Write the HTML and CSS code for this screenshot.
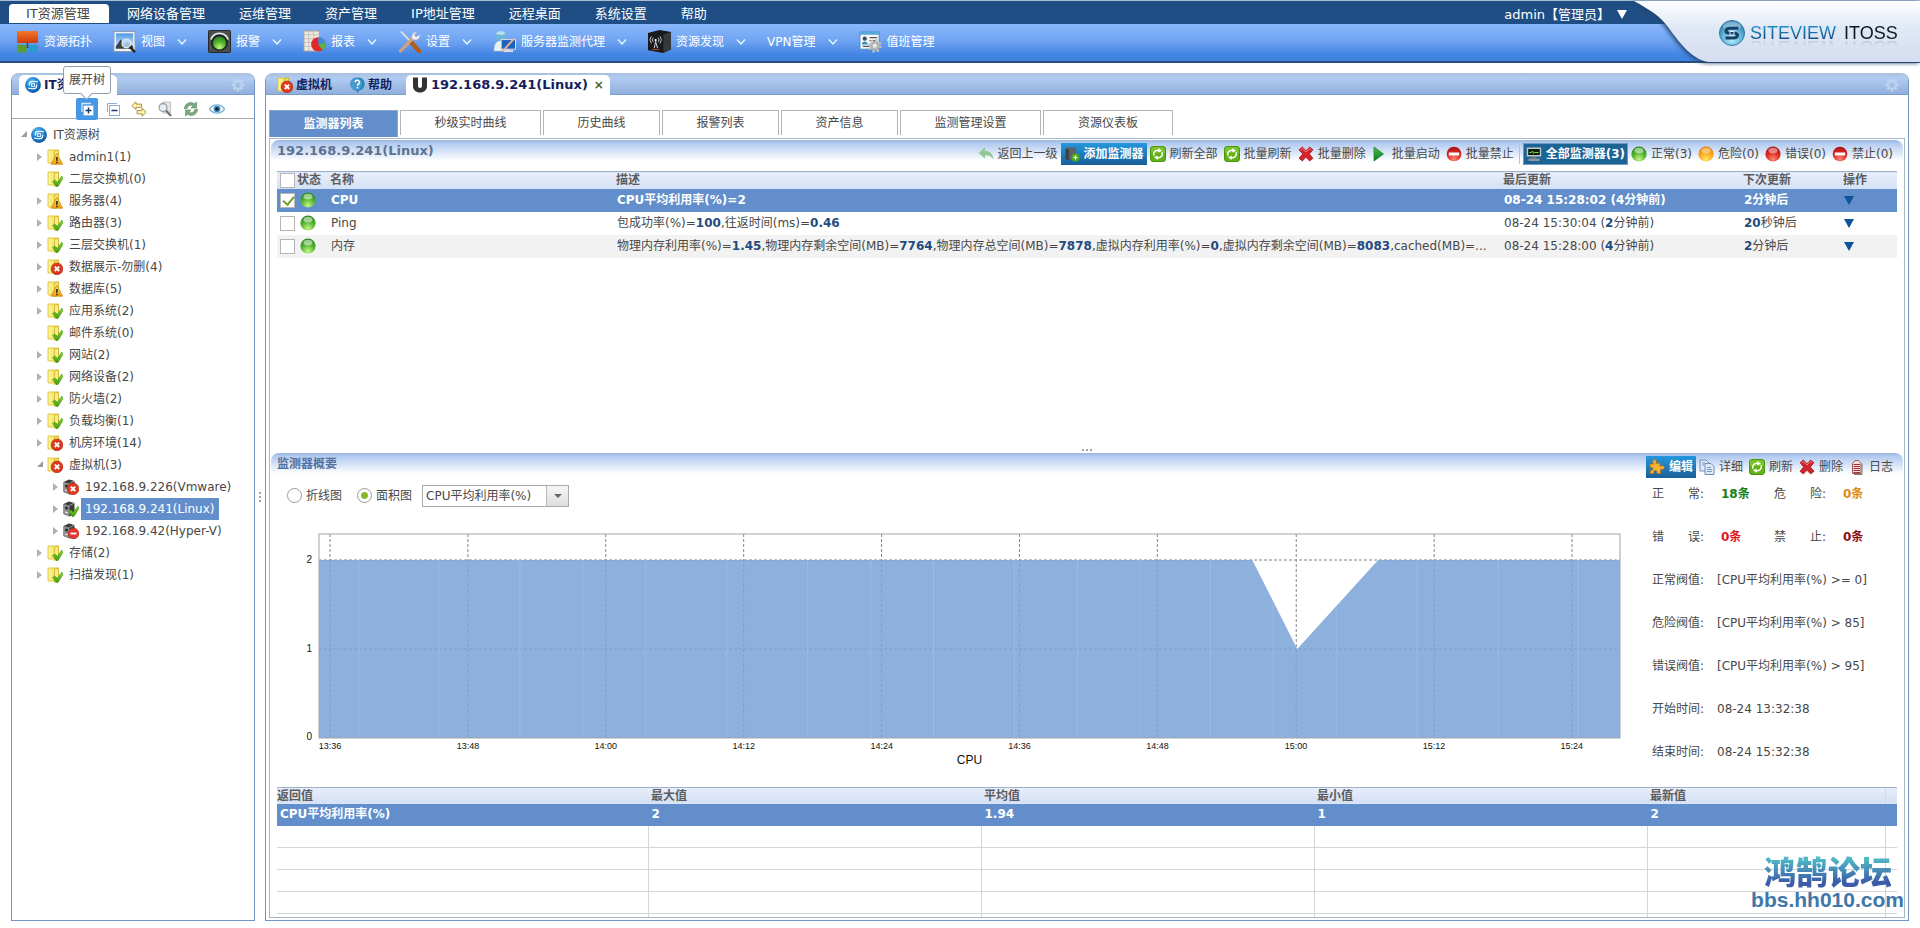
FILE: index.html
```html
<!DOCTYPE html>
<html lang="zh-CN">
<head>
<meta charset="utf-8">
<title>SiteView ITOSS</title>
<link rel="stylesheet" href="styles.css">
</head>
<body>
<svg class="sprite" aria-hidden="true">
  <defs>
    <radialGradient id="gBlue" cx=".4" cy=".3" r=".8"><stop offset="0" stop-color="#5fbcf0"/><stop offset=".5" stop-color="#1f80d0"/><stop offset="1" stop-color="#0a4a9a"/></radialGradient>
    <radialGradient id="gGlass" cx=".5" cy=".75" r=".8"><stop offset="0" stop-color="#b9ecfb"/><stop offset=".5" stop-color="#5fb2d8"/><stop offset="1" stop-color="#1c6aa0"/></radialGradient>
    <radialGradient id="gGreen" cx=".5" cy=".85" r=".9"><stop offset="0" stop-color="#c8f58a"/><stop offset=".5" stop-color="#52b52c"/><stop offset="1" stop-color="#1f7a1c"/></radialGradient>
    <radialGradient id="gOrange" cx=".5" cy=".85" r=".9"><stop offset="0" stop-color="#ffe76a"/><stop offset=".5" stop-color="#fba81c"/><stop offset="1" stop-color="#e07a00"/></radialGradient>
    <radialGradient id="gRed" cx=".5" cy=".85" r=".9"><stop offset="0" stop-color="#ff8a70"/><stop offset=".5" stop-color="#dd2a22"/><stop offset="1" stop-color="#a30c10"/></radialGradient>
    <linearGradient id="gFolder" x1="0" x2="1"><stop offset="0" stop-color="#fdf7a0"/><stop offset="1" stop-color="#eed63c"/></linearGradient>
    <linearGradient id="gWarn" x2="0" y2="1"><stop offset="0" stop-color="#ffe25a"/><stop offset="1" stop-color="#f39a12"/></linearGradient>
    <linearGradient id="gLeaf" x2="0" y2="1"><stop offset="0" stop-color="#8fd62e"/><stop offset="1" stop-color="#3f9a10"/></linearGradient>
    <linearGradient id="gPlay" x2="0" y2="1"><stop offset="0" stop-color="#4cc04c"/><stop offset="1" stop-color="#0c7a22"/></linearGradient>
    <linearGradient id="gBrand" x2="0" y2="1"><stop offset="0" stop-color="#ffffff"/><stop offset=".45" stop-color="#dfe8f5"/><stop offset="1" stop-color="#d5ddf0"/></linearGradient>
    <linearGradient id="gTopo" x2="0" y2="1"><stop offset="0" stop-color="#f4762c"/><stop offset="1" stop-color="#d13c08"/></linearGradient>
    <linearGradient id="gSky" x2="0" y2="1"><stop offset="0" stop-color="#4f9be6"/><stop offset="1" stop-color="#dcefff"/></linearGradient>
  </defs>
  <symbol id="ball" viewBox="0 0 16 16"><circle cx="8" cy="8" r="7.900" fill="url(#gBlue)"/><path d="M13 5C10.500 4 6.500 4 5.200 5 4 6.200 4.300 7 4.300 8.500M3 11C5.500 12 9.500 12 10.800 11 12 9.800 11.700 9 11.700 7.500" fill="none" stroke="#fff" stroke-width="1.200"/><rect x="6.600" y="6.600" width="2.900" height="2.900" fill="none" stroke="#e6f6ff" stroke-width=".9"/></symbol>
  <symbol id="logo" viewBox="0 0 26 26"><circle cx="13" cy="13" r="12.500" fill="url(#gGlass)" stroke="#2f78a8"/><ellipse cx="13" cy="6.500" rx="9" ry="5" fill="#fff" opacity=".35"/><path d="M19.500 8.200H11.500C8 8.200 7 9.500 7 11s1 2.300 3.500 2.300H15c2.500 0 3.500.8 3.500 2s-1 2.700-4.500 2.700H6.500" fill="none" stroke="#173f66" stroke-width="3"/><path d="M11 11.500h4v3.500h-4z" fill="none" stroke="#e6f7ff" stroke-width=".9"/></symbol>
  <symbol id="folder" viewBox="0 0 16 16"><path d="M1 1h10.500v13H1z" fill="url(#gFolder)" stroke="#d8bd2a" stroke-width=".8"/><path d="M7.500 2.500 11.500 1v13l-4 1.500z" fill="#f7ee86" stroke="#c7a921" stroke-width=".7"/></symbol>
  <symbol id="b-ok" viewBox="0 0 16 16"><path d="M5.500 10.500 8 9l2.300 2.300L14.800 5 16 7.500 11 15.500 9.600 15.900z" fill="url(#gLeaf)" stroke="#3c9413" stroke-width=".5"/></symbol>
  <symbol id="b-warn" viewBox="0 0 16 16"><path d="M9.800 4.200 15.700 15.200H4z" fill="url(#gWarn)" stroke="#c9860c" stroke-width=".7"/><path d="M9.900 8v3.800M9.900 12.800v1.500" stroke="#222" stroke-width="1.500"/></symbol>
  <symbol id="b-err" viewBox="0 0 16 16"><circle cx="10" cy="9.800" r="5.900" fill="#dd3a1f" stroke="#a8200c" stroke-width=".6"/><path d="M7.800 7.600l4.400 4.400M12.200 7.600 7.800 12" stroke="#fff" stroke-width="2"/></symbol>
  <symbol id="b-stop" viewBox="0 0 16 16"><circle cx="10.500" cy="10.500" r="5.400" fill="#e4392e" stroke="#ad1d15" stroke-width=".6"/><path d="M7.500 10.500h6" stroke="#fff" stroke-width="1.800"/></symbol>
  <symbol id="server" viewBox="0 0 16 16"><path d="M.5 3 6 .6l5.500 1.500V13L6.500 15.500.5 13z" fill="#3a3a3a"/><path d="M.5 3l6 1.600v10.900L.5 13z" fill="#8f8f8f"/><path d="M6.500 4.600 11.500 2" stroke="#bbb" stroke-width=".8"/><circle cx="3.500" cy="7" r="1.600" fill="#333"/><path d="M2 11l3 .8" stroke="#eee"/></symbol>
  <symbol id="gear" viewBox="0 0 16 16"><circle cx="8" cy="8" r="3.900" fill="none" stroke="currentColor" stroke-width="2.200"/><path d="M8 1.500v2M8 12.500v2M1.500 8h2M12.500 8h2M3.400 3.400l1.500 1.500M11.100 11.100l1.500 1.500M12.600 3.400l-1.500 1.500M4.900 11.100l-1.500 1.500" stroke="currentColor" stroke-width="2.400"/></symbol>
  <symbol id="chev" viewBox="0 0 10 8"><path d="M1 1.500 5 6l4-4.500" fill="none" stroke="#e4fbff" stroke-width="1.400"/></symbol>
  <symbol id="topo" viewBox="0 0 24 24"><path d="M12 13v5M8 18h8" stroke="#3a4a60" stroke-width="1.600"/><rect x="1" y="1" width="22" height="12.500" rx="1.500" fill="url(#gTopo)"/><rect x="1" y="15.500" width="10" height="8" rx="1.500" fill="#5b9c33"/><rect x="13" y="15.500" width="10" height="8" rx="1.500" fill="#2d9bd0"/></symbol>
  <symbol id="view" viewBox="0 0 24 24"><rect x="1" y="1.500" width="22" height="21" fill="#eef1f4" stroke="#8d98a6"/><rect x="3" y="3.500" width="18" height="16" fill="url(#gSky)"/><path d="M3 17l5-7 4 5 3-3 6 5v2.500H3z" fill="#38424a"/><circle cx="14" cy="14" r="4.500" fill="#bfe0f6" fill-opacity=".8" stroke="#dfe6ec" stroke-width="1.500"/><path d="M17.500 17.500 23 23" stroke="#222" stroke-width="2.600"/></symbol>
  <symbol id="alarm" viewBox="0 0 24 24"><rect x=".5" y=".5" width="23" height="23" rx="1" fill="#4a504d" stroke="#222"/><circle cx="12" cy="13" r="9" fill="#232826"/><path d="M3 10a9.500 9.500 0 0 1 18 0" fill="none" stroke="#e7eeea" stroke-width="1.800"/><circle cx="12" cy="13.500" r="6.800" fill="url(#gGreen)"/></symbol>
  <symbol id="report" viewBox="0 0 24 24"><rect x="1" y="1" width="16" height="21" fill="#eee9e2" stroke="#a59e96"/><path d="M1 5h16M1 9h16M1 13h16M1 17h16M6 1v21M11 1v21" stroke="#bdb6ae" stroke-width=".8"/><circle cx="16" cy="15" r="7.500" fill="#e0282e"/><path d="M16 15V7.500A7.500 7.500 0 0 1 23.300 13z" fill="#3b8fe0"/><path d="M16 15l7.300-2a7.500 7.500 0 0 1-3 8z" fill="#59b34a"/></symbol>
  <symbol id="tools" viewBox="0 0 24 24"><path d="M3 1.500 14 13" stroke="#d9dde0" stroke-width="2"/><path d="M13.500 12.500 22 22" stroke="#b65a18" stroke-width="4.500" stroke-linecap="round"/><path d="M2.500 22 16 8" stroke="#d1a37c" stroke-width="3.400" stroke-linecap="round"/><path d="M15 9.500c-2-4 1-8 5-7.500l-3 3 1.800 2.300 4-2.500c.8 4-3.800 7.200-7.800 4.700z" fill="#f0f2f3" stroke="#a8adb1" stroke-width=".6"/></symbol>
  <symbol id="agent" viewBox="0 0 24 24"><path d="M1 22c0-8 3-11 8-11s8 3 8 11z" fill="#e9f0f6" stroke="#a9bccb" stroke-width=".6"/><circle cx="8" cy="6" r="5.500" fill="#6bb7d6"/><path d="M3 4c2-4 8-4 10 0-3 2-7 1-10 0z" fill="#b9dfef"/><rect x="8.500" y="10" width="15" height="10" fill="#1c62c0" stroke="#e1e1e1"/><path d="M11 21h10v2H11z" fill="#ddd"/><path d="M22 9 13 19l-3 3" fill="none" stroke="#efb08a" stroke-width="2"/></symbol>
  <symbol id="discover" viewBox="0 0 24 24"><path d="M0 3 12 0l12 2v18l-8 4L0 21z" fill="#17191b"/><path d="M16 5 24 2v18l-8 4z" fill="#35393c"/><path d="M8 12 6.500 19M8 12l2 7" stroke="#ddd"/><circle cx="8" cy="10.500" r="1.200" fill="#fff"/><path d="M5.500 12.500a3.200 3.200 0 0 1 0-4.500M10.500 12.500a3.200 3.200 0 0 0 0-4.500M3.500 14a6 6 0 0 1 0-7.500M12.500 14a6 6 0 0 0 0-7.500" fill="none" stroke="#ddd" stroke-width=".9"/><path d="M4 20.500h8" stroke="#c04030"/></symbol>
  <symbol id="duty" viewBox="0 0 24 24"><rect x="1" y="2" width="20" height="18" fill="#f5f7f8" stroke="#4f8fc0"/><path d="M1 2h20v3H1z" fill="#5aa7da"/><circle cx="6" cy="9" r="2.200" fill="#3c4f5c"/><path d="M3 15c0-4 6-4 6 0z" fill="#3c8fc0"/><path d="M11 8h8M11 11h6M4 17h7" stroke="#555" stroke-width="1.300"/><g transform="translate(9.500 9.500)"><circle cx="7" cy="7" r="6" fill="none" stroke="#c4c4c4" stroke-width="2.200" stroke-dasharray="2.400 2.300"/><circle cx="7" cy="7" r="3.600" fill="#eee" stroke="#b4b4b4" stroke-width="3"/></g></symbol>
  <symbol id="expand" viewBox="0 0 16 16"><path d="M3 11V2.500H12" fill="none" stroke="#cfe6fb" stroke-width="1.300"/><rect x="4.500" y="4.500" width="10" height="10" fill="#fff" stroke="#8fb6dd"/><path d="M9.500 6.500v6M6.500 9.500h6" stroke="#1a3c6c" stroke-width="1.500"/></symbol>
  <symbol id="collapse" viewBox="0 0 16 16"><path d="M2.500 11V2.500H12" fill="none" stroke="#8fb0cf"/><rect x="4.500" y="4.500" width="10" height="10" fill="#fff" stroke="#8fb0cf"/><path d="M6.500 9.500h6" stroke="#1a3c6c" stroke-width="1.500"/></symbol>
  <symbol id="swap" viewBox="0 0 16 16"><path d="M.8 4.700 5 .8v2.300h5.500v3.200H5v2.300z" fill="#fff4b8" stroke="#a5862a" stroke-width=".9"/><path d="M15.200 11.200 11 7.200v2.400H6v3.200h5v2.400z" fill="#fff4b8" stroke="#a5862a" stroke-width=".9"/></symbol>
  <symbol id="find" viewBox="0 0 16 16"><path d="M6 1h7.500v11H6z" fill="#e6e6e6" stroke="#b5b5b5" stroke-width=".8"/><circle cx="6" cy="6.500" r="4" fill="#e9eef2" stroke="#9da2a5" stroke-width="1.300"/><path d="M9 9.500 14 15" stroke="#777" stroke-width="2.400"/></symbol>
  <symbol id="reload" viewBox="0 0 16 16"><path d="M1.500 8C1 3 7-.5 11.500 2.800L13.500.8V7H8l2-2.200C7.500 3.400 4.500 5 4.300 7.500z" fill="#7ca97c" stroke="#557e59" stroke-width=".5"/><path d="M14.500 8c.5 5-5.500 8.500-10 5.200L2.500 15.200V9H8l-2 2.200c2.500 1.400 5.500-.2 5.700-2.700z" fill="#7ca97c" stroke="#557e59" stroke-width=".5"/></symbol>
  <symbol id="eye" viewBox="0 0 16 16"><path d="M.5 8C4 2.500 12 2.500 15.500 8 12 13.500 4 13.500.5 8z" fill="#eef7fc" stroke="#76b0d2" stroke-width="1.300"/><circle cx="8" cy="8" r="3.300" fill="#3a86b8"/><circle cx="8" cy="8" r="1.800" fill="#12222e"/></symbol>
  <symbol id="helpi" viewBox="0 0 16 16"><path d="M8.500.5a6.500 6.500 0 0 1 1.500 13L9 16l-2-2.500A6.500 6.500 0 0 1 8.500.5z" fill="#2b86bd"/><circle cx="7" cy="7" r="6" fill="#58a9d6" opacity=".6"/><path d="M6.200 5.200c.2-2.700 4.600-2.300 4.300.2-.2 1.400-2 1.700-2 3.300M8.500 10v1.600" fill="none" stroke="#fff" stroke-width="1.500"/></symbol>
  <symbol id="umark" viewBox="0 0 16 16"><path d="M1 .5h5V9c0 2.500 4 2.500 4 0V.5h5V9c0 4-3 6.500-7 6.500S1 13 1 9z" fill="#333"/></symbol>
  <symbol id="back" viewBox="0 0 16 16"><path d="M7 1.500v3.300c5 .2 8 3 8.500 8.700-2-3.300-4.500-4.300-8.500-4.200v3.200L.5 7z" fill="#93c795"/></symbol>
  <symbol id="addmon" viewBox="0 0 16 16"><path d="M1.500 2.500 7 1l5 1v10l-5 2-5.500-1z" fill="#5c6266"/><path d="M1.500 2.500 5 3.500V14l-3.500-1z" fill="#3d4245"/><circle cx="11.500" cy="11.500" r="4" fill="#4fa81c"/><path d="M9.500 11.500h4M11.500 9.500v4" stroke="#fff" stroke-width="1.200"/></symbol>
  <symbol id="refresh" viewBox="0 0 16 16"><rect x=".5" y=".5" width="15" height="15" rx="2.500" fill="#62b117" stroke="#4c970c"/><path d="M1 4a3 3 0 0 1 3-3h8a3 3 0 0 1 3 3v3H1z" fill="#8bcf3c" opacity=".6"/><path d="M3.900 9.800C2.800 6.500 5.500 3.700 9 4.300M12.100 6.200c1.100 3.300-1.600 6.100-5.100 5.500" fill="none" stroke="#fff" stroke-width="1.500"/><path d="M8.500 2l3.700 3-4.200 1.300zM7.500 14l-3.700-3L8 9.700z" fill="#fff"/></symbol>
  <symbol id="del" viewBox="0 0 16 16"><path d="M1 3.800 4.300 1 8 4.700 11.700 1 15 3.800 11.300 8 15 12.200 11.700 15 8 11.300 4.300 15 1 12.200 4.700 8z" fill="#d3222a" stroke="#9c1018" stroke-width=".7"/><path d="M2.500 4 4.300 2.500 8 6l3.700-3.500L13.500 4" fill="none" stroke="#f28a86" stroke-width=".9"/></symbol>
  <symbol id="play" viewBox="0 0 16 16"><path d="M2 1l9.500 7L2 15z" fill="url(#gPlay)" stroke="#18892a" stroke-width=".8"/></symbol>
  <symbol id="stop" viewBox="0 0 16 16"><circle cx="8" cy="8" r="7.300" fill="url(#gRed)"/><rect x="2.800" y="6.500" width="10.400" height="3" fill="#fff"/></symbol>
  <symbol id="mon" viewBox="0 0 16 16"><rect x=".8" y="1.500" width="14.400" height="9" fill="#c3c8ca"/><rect x="2.200" y="3" width="11.600" height="6" fill="#0c1f0c"/><path d="M3.500 6.500h2l1-1.500 1 2.500 1-1h4" fill="none" stroke="#7cdf3a"/><path d="M6 10.500h4v2H6z" fill="#777"/><rect x="2.500" y="12.500" width="11" height="2.500" fill="#8d979c"/></symbol>
  <symbol id="green" viewBox="0 0 16 16"><circle cx="8" cy="8" r="7.600" fill="url(#gGreen)"/><ellipse cx="8" cy="4.600" rx="4.500" ry="2.900" fill="#fff" opacity=".5"/></symbol>
  <symbol id="orange" viewBox="0 0 16 16"><circle cx="8" cy="8" r="7.600" fill="url(#gOrange)"/><ellipse cx="8" cy="4.600" rx="4.500" ry="2.900" fill="#fff" opacity=".4"/></symbol>
  <symbol id="red" viewBox="0 0 16 16"><circle cx="8" cy="8" r="7.600" fill="url(#gRed)"/><ellipse cx="8" cy="4.600" rx="4.500" ry="2.900" fill="#fff" opacity=".45"/></symbol>
  <symbol id="puzzle" viewBox="0 0 16 16"><path d="M1 5h3.500C3 2 4 .8 5.500.8S8 2 7 4.500l4-.5v3.500c3-1.500 4.200-.5 4.200 1S14 11 11.500 10v4.500H7.800c.8-2-.2-3-1.500-3s-2 1.200-1.300 3H1.200L1.500 11c1.800.8 2.500-.2 2.500-1.300S3.200 8 1.300 8.700z" fill="#f8b133" stroke="#b97415" stroke-width=".7"/></symbol>
  <symbol id="copy" viewBox="0 0 16 16"><path d="M1 1h6l3 3v8H1z" fill="#dfe8f6" stroke="#7390bd"/><path d="M6 4.500h6l3 3v8H6z" fill="#dfe8f6" stroke="#7390bd"/><path d="M8 8.500h4M8 10.500h5M8 12.500h5M3 4h3M3 6h2" stroke="#7a98c8"/></symbol>
  <symbol id="log" viewBox="0 0 16 16"><path d="M3.500 4.500 6 1.500h3.500L12 4.500v10H3.500z" fill="#f3dedd" stroke="#8c3a3a" stroke-width=".8"/><path d="M4.500 5.500h6.500M4.500 7.500h6.500M4.500 9.500h6.500M4.500 11.500h6.500M4.500 13.500h6.500" stroke="#a12e2e"/><path d="M13 4.500v11H5" fill="none" stroke="#777"/></symbol>
</svg>

<header class="top">
  <div class="menus">
    <nav class="nav">
      <a class="nav-item on" href="#">IT资源管理</a><a class="nav-item" href="#">网络设备管理</a><a class="nav-item" href="#">运维管理</a><a class="nav-item" href="#">资产管理</a><a class="nav-item" href="#">IP地址管理</a><a class="nav-item" href="#">远程桌面</a><a class="nav-item" href="#">系统设置</a><a class="nav-item" href="#">帮助</a>
      <button class="user" type="button">admin【管理员】<span class="user-arrow"></span></button>
    </nav>
    <div class="bar">
      <button type="button"><svg class="i24"><use href="#topo"/></svg>资源拓扑</button>
      <button type="button"><svg class="i24"><use href="#view"/></svg>视图<svg class="chev"><use href="#chev"/></svg></button>
      <button type="button"><svg class="i24"><use href="#alarm"/></svg>报警<svg class="chev"><use href="#chev"/></svg></button>
      <button type="button"><svg class="i24"><use href="#report"/></svg>报表<svg class="chev"><use href="#chev"/></svg></button>
      <button type="button"><svg class="i24"><use href="#tools"/></svg>设置<svg class="chev"><use href="#chev"/></svg></button>
      <button type="button"><svg class="i24"><use href="#agent"/></svg>服务器监测代理<svg class="chev"><use href="#chev"/></svg></button>
      <button type="button"><svg class="i24"><use href="#discover"/></svg>资源发现<svg class="chev"><use href="#chev"/></svg></button>
      <button type="button">VPN管理<svg class="chev"><use href="#chev"/></svg></button>
      <button type="button"><svg class="i24"><use href="#duty"/></svg>值班管理</button>
    </div>
  </div>
  <div class="brand">
    <svg class="brand-bg" viewBox="0 0 286 61" aria-hidden="true"><path d="M0 0C18 10 27 16 34 26 47 44 60 60 76 61H286V0Z" fill="url(#gBrand)"/></svg>
    <svg class="brand-ball"><use href="#logo"/></svg>
    <span class="brand-a">SITEVIEW</span><span class="brand-b">ITOSS</span>
  </div>
</header>

<div class="work">
  <aside class="panel side">
    <div class="tabs">
      <button class="tab on side-tab" type="button"><svg class="i16"><use href="#ball"/></svg>IT资源树</button>
      <button class="cog" type="button" aria-label="设置"><svg class="i16"><use href="#gear"/></svg></button>
    </div>
    <div class="tree-tools">
      <button class="on" type="button" aria-label="展开树"><svg class="i16"><use href="#expand"/></svg><span class="tip">展开树</span></button>
      <button type="button" aria-label="收起树"><svg class="i16"><use href="#collapse"/></svg></button>
      <button type="button" aria-label="切换"><svg class="i16"><use href="#swap"/></svg></button>
      <button type="button" aria-label="查找"><svg class="i16"><use href="#find"/></svg></button>
      <button type="button" aria-label="刷新"><svg class="i16"><use href="#reload"/></svg></button>
      <button type="button" aria-label="查看"><svg class="i16"><use href="#eye"/></svg></button>
    </div>
    <ul class="tree">
      <li class="l0"><i class="open"></i><svg class="i16"><use href="#ball"/></svg><span>IT资源树</span></li>
      <li><i class="shut"></i><svg class="i16"><use href="#folder"/><use href="#b-warn"/></svg><span>admin1(1)</span></li>
      <li><i></i><svg class="i16"><use href="#folder"/><use href="#b-ok"/></svg><span>二层交换机(0)</span></li>
      <li><i class="shut"></i><svg class="i16"><use href="#folder"/><use href="#b-warn"/></svg><span>服务器(4)</span></li>
      <li><i class="shut"></i><svg class="i16"><use href="#folder"/><use href="#b-ok"/></svg><span>路由器(3)</span></li>
      <li><i class="shut"></i><svg class="i16"><use href="#folder"/><use href="#b-ok"/></svg><span>三层交换机(1)</span></li>
      <li><i class="shut"></i><svg class="i16"><use href="#folder"/><use href="#b-err"/></svg><span>数据展示-勿删(4)</span></li>
      <li><i class="shut"></i><svg class="i16"><use href="#folder"/><use href="#b-warn"/></svg><span>数据库(5)</span></li>
      <li><i class="shut"></i><svg class="i16"><use href="#folder"/><use href="#b-ok"/></svg><span>应用系统(2)</span></li>
      <li><i></i><svg class="i16"><use href="#folder"/><use href="#b-ok"/></svg><span>邮件系统(0)</span></li>
      <li><i class="shut"></i><svg class="i16"><use href="#folder"/><use href="#b-ok"/></svg><span>网站(2)</span></li>
      <li><i class="shut"></i><svg class="i16"><use href="#folder"/><use href="#b-ok"/></svg><span>网络设备(2)</span></li>
      <li><i class="shut"></i><svg class="i16"><use href="#folder"/><use href="#b-ok"/></svg><span>防火墙(2)</span></li>
      <li><i class="shut"></i><svg class="i16"><use href="#folder"/><use href="#b-ok"/></svg><span>负载均衡(1)</span></li>
      <li><i class="shut"></i><svg class="i16"><use href="#folder"/><use href="#b-err"/></svg><span>机房环境(14)</span></li>
      <li><i class="open"></i><svg class="i16"><use href="#folder"/><use href="#b-err"/></svg><span>虚拟机(3)</span></li>
      <li class="l2"><i class="shut"></i><svg class="i16"><use href="#server"/><use href="#b-err"/></svg><span>192.168.9.226(Vmware)</span></li>
      <li class="l2 sel"><i class="shut"></i><svg class="i16"><use href="#server"/><use href="#b-ok"/></svg><span>192.168.9.241(Linux)</span></li>
      <li class="l2"><i class="shut"></i><svg class="i16"><use href="#server"/><use href="#b-stop"/></svg><span>192.168.9.42(Hyper-V)</span></li>
      <li><i class="shut"></i><svg class="i16"><use href="#folder"/><use href="#b-ok"/></svg><span>存储(2)</span></li>
      <li><i class="shut"></i><svg class="i16"><use href="#folder"/><use href="#b-ok"/></svg><span>扫描发现(1)</span></li>
    </ul>
  </aside>

  <div class="split-v"><b></b><b></b><b></b></div>

  <main class="panel main">
    <div class="tabs">
      <button class="tab" type="button"><svg class="i16"><use href="#folder"/><use href="#b-err"/></svg>虚拟机</button>
      <button class="tab" type="button"><svg class="i16"><use href="#helpi"/></svg>帮助</button>
      <button class="tab on host-tab" type="button"><svg class="i16"><use href="#umark"/></svg>192.168.9.241(Linux)<span class="close">×</span></button>
      <button class="cog" type="button" aria-label="设置"><svg class="i16"><use href="#gear"/></svg></button>
    </div>
    <div class="pages">
      <button class="page on" type="button">监测器列表</button>
      <button class="page wide" type="button">秒级实时曲线</button>
      <button class="page" type="button">历史曲线</button>
      <button class="page" type="button">报警列表</button>
      <button class="page" type="button">资产信息</button>
      <button class="page wide" type="button">监测管理设置</button>
      <button class="page mid" type="button">资源仪表板</button>
    </div>
    <div class="content">
      <section class="list">
        <div class="head">
          <h2 class="host">192.168.9.241(Linux)</h2>
          <div class="acts">
            <button type="button"><svg class="i16"><use href="#back"/></svg>返回上一级</button>
            <button class="hot" type="button"><svg class="i16"><use href="#addmon"/></svg>添加监测器</button>
            <button type="button"><svg class="i16"><use href="#refresh"/></svg>刷新全部</button>
            <button type="button"><svg class="i16"><use href="#refresh"/></svg>批量刷新</button>
            <button type="button"><svg class="i16"><use href="#del"/></svg>批量删除</button>
            <button type="button"><svg class="i16"><use href="#play"/></svg>批量启动</button>
            <button type="button"><svg class="i16"><use href="#stop"/></svg>批量禁止</button>
            <span class="sep"></span>
            <button class="hot all" type="button"><svg class="i16"><use href="#mon"/></svg>全部监测器(3)</button>
            <button type="button"><svg class="i16"><use href="#green"/></svg>正常(3)</button>
            <button type="button"><svg class="i16"><use href="#orange"/></svg>危险(0)</button>
            <button type="button"><svg class="i16"><use href="#red"/></svg>错误(0)</button>
            <button type="button"><svg class="i16"><use href="#stop"/></svg>禁止(0)</button>
          </div>
        </div>
        <table class="grid monitors">
          <colgroup><col class="c-check"><col class="c-state"><col class="c-name"><col><col class="c-last"><col class="c-next"><col class="c-op"><col class="c-end"></colgroup>
          <thead><tr><th><input type="checkbox" aria-label="全选"></th><th class="flush">状态</th><th>名称</th><th>描述</th><th>最后更新</th><th>下次更新</th><th>操作</th><th></th></tr></thead>
          <tbody>
            <tr class="sel"><td><input type="checkbox" checked aria-label="CPU"></td><td><svg class="i16"><use href="#green"/></svg></td><td>CPU</td><td>CPU平均利用率(%)=<b>2</b></td><td>08-24 15:28:02 (<b>4</b>分钟前)</td><td><b>2</b>分钟后</td><td><button class="drop" type="button" aria-label="操作"></button></td><td></td></tr>
            <tr><td><input type="checkbox" aria-label="Ping"></td><td><svg class="i16"><use href="#green"/></svg></td><td>Ping</td><td>包成功率(%)=<b>100</b>,往返时间(ms)=<b>0.46</b></td><td>08-24 15:30:04 (<b>2</b>分钟前)</td><td><b>20</b>秒钟后</td><td><button class="drop" type="button" aria-label="操作"></button></td><td></td></tr>
            <tr class="alt"><td><input type="checkbox" aria-label="内存"></td><td><svg class="i16"><use href="#green"/></svg></td><td>内存</td><td>物理内存利用率(%)=<b>1.45</b>,物理内存剩余空间(MB)=<b>7764</b>,物理内存总空间(MB)=<b>7878</b>,虚拟内存利用率(%)=<b>0</b>,虚拟内存剩余空间(MB)=<b>8083</b>,cached(MB)=...</td><td>08-24 15:28:00 (<b>4</b>分钟前)</td><td><b>2</b>分钟后</td><td><button class="drop" type="button" aria-label="操作"></button></td><td></td></tr>
          </tbody>
        </table>
      </section>

      <div class="split-h"><b></b><b></b><b></b></div>

      <section class="summary">
        <div class="head">
          <h2>监测器概要</h2>
          <div class="acts">
            <button class="hot" type="button"><svg class="i16"><use href="#puzzle"/></svg>编辑</button>
            <button type="button"><svg class="i16"><use href="#copy"/></svg>详细</button>
            <button type="button"><svg class="i16"><use href="#refresh"/></svg>刷新</button>
            <button type="button"><svg class="i16"><use href="#del"/></svg>删除</button>
            <button type="button"><svg class="i16"><use href="#log"/></svg>日志</button>
          </div>
        </div>
        <div class="body">
          <div class="graph">
            <form class="options">
              <label><input type="radio" name="kind">折线图</label>
              <label><input type="radio" name="kind" checked>面积图</label>
              <span class="pick"><select aria-label="指标"><option>CPU平均利用率(%)</option></select></span>
            </form>
            <svg class="chart" role="img" aria-label="CPU">
              <svg width="100%" height="204" viewBox="0 0 1302 204" preserveAspectRatio="none">
                <path class="rule" d="M11 0V204M149 0V204M287 0V204M425 0V204M563 0V204M701 0V204M839 0V204M978 0V204M1116 0V204M1254 0V204M0 26H1302M0 115H1302"/>
                <path class="area" d="M0 26H934L979 115 1060 26H1302V204H0Z"/>
                <path class="seam" d="M40 26V204M120 26V204M201 26V204M264 26V204M327 26V204M408 26V204M489 26V204M552 26V204M615 26V204M696 26V204M759 26V204M822 26V204M892 26V204M955 68V204M1018 74V204M1099 26V204M1180 26V204M1260 26V204"/>
              </svg>
              <rect class="frame" width="100%" height="204"/>
              <g class="ylab"><text x="-7" y="29">2</text><text x="-7" y="118">1</text><text x="-7" y="206">0</text></g>
              <g class="xlab"><text x="0.85%" y="215">13:36</text><text x="11.45%" y="215">13:48</text><text x="22.05%" y="215">14:00</text><text x="32.65%" y="215">14:12</text><text x="43.25%" y="215">14:24</text><text x="53.85%" y="215">14:36</text><text x="64.45%" y="215">14:48</text><text x="75.1%" y="215">15:00</text><text x="85.7%" y="215">15:12</text><text x="96.3%" y="215">15:24</text></g>
              <text class="name" x="50%" y="230">CPU</text>
            </svg>
          </div>
          <dl class="facts">
            <div class="pair"><dt>正　　常:</dt><dd class="ok">18条</dd><dt>危　　险:</dt><dd class="warn">0条</dd></div>
            <div class="pair"><dt>错　　误:</dt><dd class="err">0条</dd><dt>禁　　止:</dt><dd class="off">0条</dd></div>
            <div><dt>正常阀值:</dt><dd>[CPU平均利用率(%) &gt;= 0]</dd></div>
            <div><dt>危险阀值:</dt><dd>[CPU平均利用率(%) &gt; 85]</dd></div>
            <div><dt>错误阀值:</dt><dd>[CPU平均利用率(%) &gt; 95]</dd></div>
            <div><dt>开始时间:</dt><dd>08-24 13:32:38</dd></div>
            <div><dt>结束时间:</dt><dd>08-24 15:32:38</dd></div>
          </dl>
        </div>
        <table class="grid values">
          <colgroup><col class="v-name"><col class="v-num"><col class="v-num"><col class="v-num"><col><col class="c-end"></colgroup>
          <thead><tr><th class="flush">返回值</th><th>最大值</th><th>平均值</th><th>最小值</th><th>最新值</th><th></th></tr></thead>
          <tbody>
            <tr class="sel"><td>CPU平均利用率(%)</td><td>2</td><td>1.94</td><td>1</td><td>2</td><td></td></tr>
            <tr><td></td><td></td><td></td><td></td><td></td><td></td></tr>
            <tr><td></td><td></td><td></td><td></td><td></td><td></td></tr>
            <tr><td></td><td></td><td></td><td></td><td></td><td></td></tr>
            <tr><td></td><td></td><td></td><td></td><td></td><td></td></tr>
            <tr class="tail"><td></td><td></td><td></td><td></td><td></td><td></td></tr>
          </tbody>
        </table>
      </section>
    </div>
    <div class="mark"><span class="mark-name">鸿鹄论坛</span><span class="mark-url">bbs.hh010.com</span></div>
  </main>
</div>
</body>
</html>
```

FILE: styles.css
```css
* { box-sizing: border-box; }

html, body { margin: 0; }

body {
  min-height: 100vh;
  display: flex;
  flex-direction: column;
  background: #fff;
  color: #484848;
  font: 12px/18px "DejaVu Sans", "Noto Sans CJK SC", sans-serif;
}

button, select, input {
  margin: 0;
  font: inherit;
  color: inherit;
}

button {
  padding: 0;
  border: 0;
  background: none;
  white-space: nowrap;
}

.sprite { position: absolute; width: 0; height: 0; }
.i16 { width: 16px; height: 16px; flex: none; display: block; }
.i24 { width: 23px; height: 23px; flex: none; }

/* header */
.top {
  display: flex;
  height: 63px;
  border-top: 1px solid #a9bdd3;
  border-bottom: 2px solid #274d7c;
  background: linear-gradient(#1f4e84 0 23px, #8ab7fc 23px, #6fa3f2 40px, #4284e2 54px, #3f83de 100%);
}
.menus { flex: 1; min-width: 0; }
.nav {
  display: flex;
  height: 23px;
  padding-left: 9px;
  font-size: 13px;
}
.nav-item {
  padding: 0 17px;
  line-height: 25px;
  color: #fff;
  text-decoration: none;
  white-space: nowrap;
}
.nav-item.on {
  margin-top: 3px;
  margin-right: 1px;
  padding: 0 18px 0 17px;
  width: 100px;
  height: 19px;
  line-height: 20px;
  background: #fff;
  color: #444;
  border-radius: 4px 4px 0 0;
}
.user {
  display: flex;
  align-items: center;
  gap: 7px;
  margin-left: auto;
  padding: 4px 7px 0 0;
  color: #fff;
}
.user-arrow {
  border: 5px solid transparent;
  border-top: 9px solid #fff;
  border-bottom: 0;
}
.bar {
  display: flex;
  align-items: center;
  gap: 21px;
  height: 35px;
  padding-left: 16px;
  color: #fff;
}
.bar button { display: flex; align-items: center; gap: 5px; }
.chev { width: 10px; height: 8px; margin-left: 7px; }

.brand {
  position: relative;
  display: flex;
  width: 286px;
  height: 60px;
  padding: 19px 0 0 85px;
  font: 18px/26px "Liberation Sans", sans-serif;
}
.brand-bg { position: absolute; top: 0; left: 0; width: 286px; height: 61px; filter: drop-shadow(-2px 1px 2px #23456f); }
.brand-ball { position: relative; width: 26px; height: 26px; }
.brand-a, .brand-b {
  position: relative;
  height: 26px;
  margin-left: 5px;
  -webkit-box-reflect: below -12px linear-gradient(transparent 50%, rgba(0, 0, 0, .35));
}
.brand-a {
  background: linear-gradient(#1f86c0 30%, #15497f 75%);
  -webkit-background-clip: text;
  background-clip: text;
  color: transparent;
}
.brand-b { margin-left: 8px; color: #10161f; }

/* panels */
.work {
  flex: 1;
  display: flex;
  padding: 10px 11px 7px;
}
.panel {
  display: flex;
  flex-direction: column;
  border: 1px solid #7393bf;
  border-top: 0;
  border-radius: 8px 8px 0 0;
}
.side { width: 244px; flex: none; }
.main { position: relative; flex: 1; min-width: 0; padding: 0 3px 2px; }
.tabs {
  display: flex;
  height: 22px;
  padding: 2px 8px 0 7px;
  background: linear-gradient(#a8c0dd, #b2cbf2 25%, #90afdb);
  border-bottom: 1px solid #7b9dcb;
  border-radius: 7px 7px 0 0;
}
.main .tabs { margin: 0 -3px; padding-left: 8px; }
.tab {
  display: flex;
  align-items: center;
  gap: 3px;
  height: 20px;
  padding: 0 14px 0 3px;
  color: #14205c;
  font-weight: bold;
}
.tab.on { background: #fff; padding: 0 6px; border-radius: 5px 5px 0 0; }
.side-tab { width: 98px; }
.host-tab { font-size: 13px; }
.close { margin-left: 3px; color: #4e5a1e; font-size: 12px; }
.cog { margin-left: auto; color: #bcd2ee; }

.tree-tools {
  display: flex;
  gap: 4px;
  height: 24px;
  padding: 3px 0 0 64px;
  border-bottom: 1px solid #a9a9a9;
}
.tree-tools button {
  position: relative;
  display: grid;
  place-items: center;
  width: 22px;
  height: 22px;
}
.tree-tools .on { background: #4597e8; border-radius: 2px; }
.tip {
  position: absolute;
  left: -13px;
  bottom: 26px;
  padding: 4px 5px;
  background: #fff;
  border: 1px solid #8f9fb3;
  border-radius: 3px;
}
.tip::after {
  content: "";
  position: absolute;
  left: 18px;
  bottom: -5px;
  width: 8px;
  height: 8px;
  background: #fff;
  border: solid #8f9fb3;
  border-width: 0 1px 1px 0;
  transform: rotate(45deg);
}

.tree { margin: 0; padding: 5px 0 0; list-style: none; }
.tree li { display: flex; align-items: center; height: 22px; padding-left: 25px; }
.tree .l0 { padding-left: 9px; }
.tree .l2 { padding-left: 41px; }
.tree i { width: 10px; height: 8px; flex: none; }
.tree .shut::before {
  content: "";
  display: block;
  width: 0;
  border: 4px solid transparent;
  border-left: 5px solid #b0b0b0;
  border-right: 0;
}
.tree .open::before {
  content: "";
  display: block;
  width: 0;
  border-left: 6px solid transparent;
  border-bottom: 6px solid #9b9b9b;
}
.tree span { padding: 0 4px; margin-left: 2px; line-height: 22px; white-space: nowrap; }
.tree .sel span { background: #628fcc; color: #fff; }

.split-v { display: flex; flex-direction: column; justify-content: center; align-items: center; gap: 2px; width: 10px; }
.split-h { display: flex; justify-content: center; align-items: center; gap: 2px; height: 6px; }
.split-v b, .split-h b { width: 2px; height: 2px; background: #a4a4a4; }

/* page tabs */
.pages { display: flex; gap: 2px; padding: 15px 0 0; height: 43px; }
.page {
  width: 117px;
  border: 1px solid #b4b4b4;
  border-bottom: 0;
  height: 25px;
}
.page.on { width: 129px; height: 27px; background: #628fcc; border-color: #8aa8cf; color: #fff; font-weight: bold; }
.page.wide { width: 141px; }
.page.mid { width: 130px; }

.content {
  flex: 1;
  display: flex;
  flex-direction: column;
  border: 1px solid #a9b6cb;
  padding: 1px 1px 0;
}
.list { flex: 1; }

.head {
  display: flex;
  justify-content: space-between;
  height: 25px;
  padding: 0 7px 0 6px;
  background: linear-gradient(#9ab7dd, #b3cbf0 15%, #fff 95%) no-repeat 0 0 / 100% 22px;
  border-radius: 8px 8px 0 0;
}
.head h2 { margin: 0; font-size: 12px; line-height: 23px; color: #53719f; }
.head .host { font-size: 13px; line-height: 21px; color: #5c7290; }
.acts { display: flex; padding-top: 3px; }
.acts button { display: flex; align-items: center; gap: 4px; height: 22px; padding: 0 3px; }
.acts .hot { background: linear-gradient(#2598dd, #1a5f9a); color: #fff; font-weight: bold; }
.acts .all { background: #1c6396; border: 1px solid #6f9cbd; padding: 0 2px; }
.sep { width: 2px; margin: 1px 2px; border-left: 1px solid #b8c4d4; }

/* tables */
.grid { width: calc(100% - 12px); margin: 6px 6px 0; border-collapse: collapse; table-layout: fixed; }
.grid th {
  height: 17px;
  padding: 0 3px;
  border-top: 1px solid #9fb0cb;
  background: linear-gradient(#e8eefb, #d3e0f5);
  text-align: left;
  line-height: 16px;
  font-weight: bold;
  color: #5c5c5c;
}
.grid .flush { padding: 0; }
.grid td { padding: 0 3px; white-space: nowrap; overflow: hidden; text-overflow: ellipsis; }
.grid .sel td { background: #628fcc; color: #fff; font-weight: bold; }
.monitors td { height: 23px; }
.monitors td:nth-child(n+3) { padding-left: 4px; }
.monitors .alt td { background: #f2f2f2; }
.monitors b { color: #1f4b80; }
.monitors .sel b { color: #fff; }
.monitors .c-check { width: 20px; }
.monitors .c-state { width: 30px; }
.c-name { width: 286px; }
.c-last { width: 240px; }
.c-next { width: 100px; }
.c-op { width: 45px; }
.c-end { width: 12px; }
.monitors input {
  appearance: none;
  display: block;
  width: 15px;
  height: 15px;
  border: 1px solid #b5b5b5;
  background: #fff;
}
.monitors th:first-child, .monitors td:first-child { padding: 0 0 0 3px; }
.monitors input:checked::before {
  content: "";
  display: block;
  width: 5px;
  height: 9px;
  margin: 0 0 0 4px;
  border: solid #6fa028;
  border-width: 0 2px 2px 0;
  transform: rotate(40deg);
}
.drop { display: block; border: 5px solid transparent; border-top: 9px solid #0f539a; border-bottom: 0; }

/* summary */
.body { display: flex; }
.graph { flex: 1; min-width: 0; padding: 7px 27px 0 48px; }
.options { display: flex; align-items: center; height: 22px; margin-left: -32px; }
.options label { display: flex; align-items: center; gap: 4px; margin-right: 15px; }
.options input {
  appearance: none;
  width: 15px;
  height: 15px;
  border: 1px solid #9a9a9a;
  border-radius: 50%;
}
.options input:checked { background: radial-gradient(circle, #8ab52a 0 3px, #fff 4px); }
.pick { position: relative; display: block; width: 147px; height: 22px; margin-left: -5px; }
.pick select {
  appearance: none;
  width: 100%;
  height: 22px;
  padding: 0 26px 0 3px;
  border: 1px solid #a9a9a9;
  background: linear-gradient(#f6f6f6, #dedede) no-repeat right / 21px 100%, #fff;
}
.pick::before {
  content: "";
  position: absolute;
  right: 22px;
  top: 1px;
  bottom: 1px;
  border-left: 1px solid #b9b9b9;
  pointer-events: none;
}
.pick::after {
  content: "";
  position: absolute;
  right: 7px;
  top: 9px;
  border: 4px solid transparent;
  border-top: 4px solid #666;
  border-bottom: 0;
  pointer-events: none;
}
.chart {
  display: block;
  width: 100%;
  height: 236px;
  margin-top: 27px;
  overflow: visible;
  font-family: "Liberation Sans", sans-serif;
  font-size: 9px;
}
.chart text { fill: #111; }
.area { fill: #7aa2d6; fill-opacity: .85; }
.seam { stroke: #9dbbe3; fill: none; vector-effect: non-scaling-stroke; }
.rule { stroke: #85858d; stroke-dasharray: 3 2; fill: none; vector-effect: non-scaling-stroke; }
.frame { fill: none; stroke: #a0a5ad; }
.ylab { text-anchor: end; font-size: 10px; }
.xlab { text-anchor: middle; }
.chart .name { text-anchor: middle; font-size: 12px; }

.facts { width: 256px; flex: none; margin: 0; padding: 7px 0 0 5px; }
.facts div { display: grid; grid-template-columns: 65px 1fr; height: 18px; margin-bottom: 25px; white-space: nowrap; }
.facts .pair { grid-template-columns: 69px 53px 69px 1fr; }
.facts div:last-child { margin-bottom: 0; }
.facts dt, .facts dd { margin: 0; }
.pair dd { font-weight: bold; }
.ok { color: #128012; }
.warn { color: #e08a10; }
.err { color: #e0141c; }
.off { color: #8a1014; }

.values { margin-top: 17px; }
.v-name { width: 371px; }
.v-num { width: 333px; }
.values th:last-child { border-left: 1px solid #d0d8e6; }
.values td { height: 22px; border: 1px solid #d6d6d6; border-top: 0; }
.values td:first-child { border-left: 0; }
.values td:last-child { border-right: 0; }
.values .sel td { height: 21px; border-color: #628fcc; line-height: 20px; }
.values .tail td { height: 4px; border-bottom: 0; }

/* watermark */
.mark {
  position: absolute;
  right: 4px;
  bottom: 8px;
  display: flex;
  flex-direction: column;
  align-items: flex-end;
  pointer-events: none;
}
.mark-name {
  margin-right: 12px;
  font: 900 32px/36px "Noto Sans CJK SC", sans-serif;
  background: linear-gradient(#4fb7c6 20%, #3c5ba8 85%);
  -webkit-background-clip: text;
  background-clip: text;
  color: transparent;
}
.mark-url { font: bold 21px/24px "Liberation Sans", sans-serif; color: #3f78a8; }
```
